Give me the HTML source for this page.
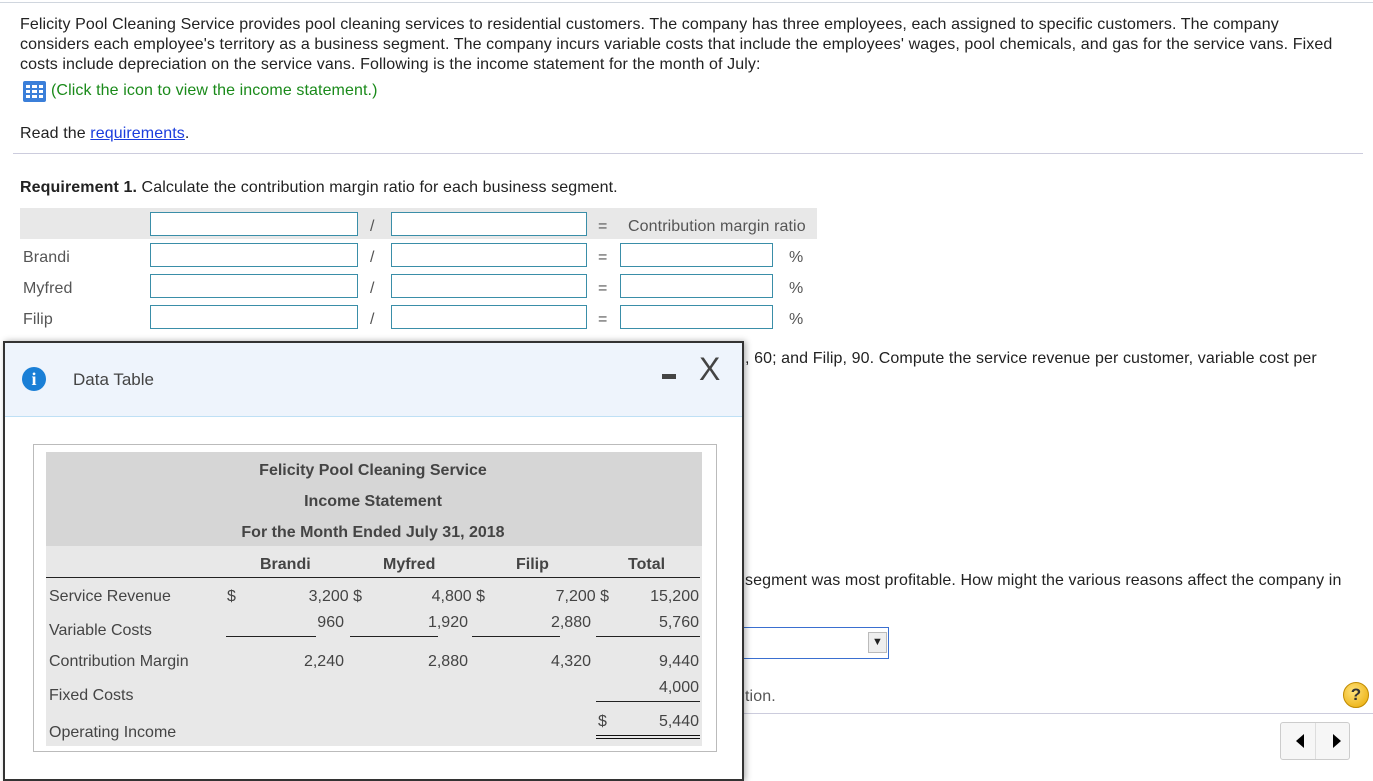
<!DOCTYPE html>
<html><head><meta charset="utf-8"><style>
*{margin:0;padding:0;box-sizing:border-box}
body{width:1373px;height:768px;overflow:hidden;background:#fff;font-family:"Liberation Sans",Arial,sans-serif;font-size:16px;letter-spacing:0.1px;color:#222;position:relative}
.a{position:absolute;white-space:nowrap}
.inp{position:absolute;height:24px;border:1px solid #3a8ea8;background:#fff}
.g{color:#555}
.dt{position:absolute;font-size:16px;letter-spacing:0;color:#444;white-space:nowrap}
.r{position:absolute;font-size:16px;letter-spacing:0;color:#444;white-space:nowrap;text-align:right;width:120px}
.c{position:absolute;left:46px;width:654px;text-align:center;font-size:16px;letter-spacing:0;font-weight:bold;color:#444}
.b{font-weight:bold}
</style></head><body>
<div class="a" style="left:0;top:2px;width:1373px;border-top:1px solid #d0d6de"></div>
<div class="a" style="left:20px;top:15px;line-height:20px">Felicity Pool Cleaning Service provides pool cleaning services to residential customers. The company has three employees, each assigned to specific customers. The company<br>considers each employee's territory as a business segment. The company incurs variable costs that include the employees' wages, pool chemicals, and gas for the service vans. Fixed<br>costs include depreciation on the service vans. Following is the income statement for the month of July:</div>
<svg class="a" style="left:23px;top:81px" width="23" height="21" viewBox="0 0 23 21"><rect width="23" height="21" rx="2" fill="#3b7fd9"/><g fill="#fff"><rect x="3" y="4" width="4" height="3"/><rect x="9" y="4" width="5" height="3"/><rect x="16" y="4" width="4" height="3"/><rect x="3" y="9" width="4" height="3"/><rect x="9" y="9" width="5" height="3"/><rect x="16" y="9" width="4" height="3"/><rect x="3" y="14" width="4" height="3"/><rect x="9" y="14" width="5" height="3"/><rect x="16" y="14" width="4" height="3"/></g></svg>
<div class="a" style="left:51px;top:82px;color:#1a8a1a">(Click the icon to view the income statement.)</div>
<div class="a" style="left:20px;top:125px">Read the <span style="color:#1a3cdd;text-decoration:underline">requirements</span>.</div>
<div class="a" style="left:13px;top:153px;width:1350px;border-top:1px solid #ccd"></div>
<div class="a" style="left:20px;top:179px"><b>Requirement 1.</b> Calculate the contribution margin ratio for each business segment.</div>
<div class="a" style="left:20px;top:208px;width:797px;height:31px;background:#e8e8e8"></div>
<div class="inp" style="left:150px;top:212px;width:208px"></div>
<div class="inp" style="left:391px;top:212px;width:196px"></div>
<div class="a g" style="left:370px;top:218px">/</div><div class="a g" style="left:598px;top:218px">=</div>
<div class="a g" style="left:628px;top:218px">Contribution margin ratio</div>
<div class="a g" style="left:23px;top:249px">Brandi</div>
<div class="a g" style="left:23px;top:280px">Myfred</div>
<div class="a g" style="left:23px;top:311px">Filip</div>
<div class="inp" style="left:150px;top:243px;width:208px"></div><div class="inp" style="left:391px;top:243px;width:196px"></div><div class="inp" style="left:620px;top:243px;width:153px"></div>
<div class="inp" style="left:150px;top:274px;width:208px"></div><div class="inp" style="left:391px;top:274px;width:196px"></div><div class="inp" style="left:620px;top:274px;width:153px"></div>
<div class="inp" style="left:150px;top:305px;width:208px"></div><div class="inp" style="left:391px;top:305px;width:196px"></div><div class="inp" style="left:620px;top:305px;width:153px"></div>
<div class="a g" style="left:370px;top:249px">/</div><div class="a g" style="left:598px;top:249px">=</div><div class="a g" style="left:789px;top:249px">%</div>
<div class="a g" style="left:370px;top:280px">/</div><div class="a g" style="left:598px;top:280px">=</div><div class="a g" style="left:789px;top:280px">%</div>
<div class="a g" style="left:370px;top:311px">/</div><div class="a g" style="left:598px;top:311px">=</div><div class="a g" style="left:789px;top:311px">%</div>
<div class="a" style="left:745px;top:350px">, 60; and Filip, 90. Compute the service revenue per customer, variable cost per</div>
<div class="a" style="left:745px;top:572px">segment was most profitable. How might the various reasons affect the company in</div>
<div class="a" style="left:740px;top:627px;width:149px;height:32px;border:1px solid #3a6fd0;border-left:none"></div>
<div class="a" style="left:868px;top:632px;width:19px;height:21px;background:#eee;border:1px solid #bbb;font-size:11px;text-align:center;line-height:19px">▼</div>
<div class="a g" style="left:745px;top:688px">tion.</div>
<div class="a" style="left:1343px;top:682px;width:26px;height:26px;border-radius:50%;background:radial-gradient(circle at 40% 35%,#ffe27a,#e8a800);border:1px solid #c08a00;text-align:center;font-weight:bold;font-size:17px;line-height:24px;color:#333">?</div>
<div class="a" style="left:740px;top:713px;width:633px;border-top:1px solid #ccd"></div>
<div class="a" style="left:1280px;top:722px;width:70px;height:38px;border:1px solid #ccc;border-radius:3px;background:#f6f6f6"></div>
<div class="a" style="left:1315px;top:723px;height:36px;border-left:1px solid #ddd"></div>
<svg class="a" style="left:1293px;top:733px" width="50" height="16"><path d="M3 8 L11 1 L11 15Z M40 1 L48 8 L40 15Z" fill="#000"/></svg>
<!-- dialog -->
<div class="a" style="left:3px;top:341px;width:741px;height:440px;border:2px solid #333;background:#fff;box-shadow:2px 0 6px rgba(0,0,0,.3)">
 <div class="a" style="left:0;top:0;width:737px;height:74px;background:#eef4fc;border-bottom:1px solid #bfe0f5"></div>
 <div class="a" style="left:17px;top:24px;width:24px;height:24px;border-radius:50%;background:#1a7fd6;color:#fff;font-family:'Liberation Serif',serif;font-weight:bold;font-size:18px;text-align:center;line-height:24px">i</div>
 <div class="a" style="left:68px;top:27px;font-size:17px;letter-spacing:0;color:#444">Data Table</div>
 <div class="a" style="left:657px;top:31px;width:14px;height:5px;background:#444"></div>
 <div class="a" style="left:694px;top:8px;font-size:32px;letter-spacing:0;color:#444">X</div>
 <div class="a" style="left:28px;top:101px;width:684px;height:308px;border:1px solid #bbb"></div>
 <div class="a" style="left:41px;top:109px;width:656px;height:294px;background:#e8e8e8"></div>
 <div class="a" style="left:41px;top:109px;width:656px;height:94px;background:#d6d6d6"></div>
</div>
<div class="c" style="top:462px">Felicity Pool Cleaning Service</div>
<div class="c" style="top:493px">Income Statement</div>
<div class="c" style="top:524px">For the Month Ended July 31, 2018</div>
<div class="dt b" style="left:260px;top:556px">Brandi</div><div class="dt b" style="left:383px;top:556px">Myfred</div><div class="dt b" style="left:516px;top:556px">Filip</div><div class="dt b" style="left:628px;top:556px">Total</div>
<div class="a" style="left:46px;top:577px;width:654px;border-top:1px solid #222"></div>
<div class="dt" style="left:49px;top:588px">Service Revenue</div>
<div class="dt" style="left:49px;top:622px">Variable Costs</div>
<div class="dt" style="left:49px;top:653px">Contribution Margin</div>
<div class="dt" style="left:49px;top:687px">Fixed Costs</div>
<div class="dt" style="left:49px;top:724px">Operating Income</div>
<div class="dt" style="left:227px;top:588px">$</div>
<div class="r" style="left:242px;top:588px">3,200 $</div><div class="r" style="left:365px;top:588px">4,800 $</div><div class="r" style="left:489px;top:588px">7,200 $</div><div class="r" style="left:579px;top:588px">15,200</div>
<div class="r" style="left:224px;top:614px">960</div><div class="r" style="left:348px;top:614px">1,920</div><div class="r" style="left:471px;top:614px">2,880</div><div class="r" style="left:579px;top:614px">5,760</div>
<div class="a" style="left:226px;top:636px;width:90px;border-top:1px solid #222"></div>
<div class="a" style="left:350px;top:636px;width:88px;border-top:1px solid #222"></div>
<div class="a" style="left:472px;top:636px;width:88px;border-top:1px solid #222"></div>
<div class="a" style="left:596px;top:636px;width:104px;border-top:1px solid #222"></div>
<div class="r" style="left:224px;top:653px">2,240</div><div class="r" style="left:348px;top:653px">2,880</div><div class="r" style="left:471px;top:653px">4,320</div><div class="r" style="left:579px;top:653px">9,440</div>
<div class="r" style="left:579px;top:679px">4,000</div>
<div class="a" style="left:596px;top:701px;width:104px;border-top:1px solid #222"></div>
<div class="dt" style="left:598px;top:713px">$</div><div class="r" style="left:579px;top:713px">5,440</div>
<div class="a" style="left:596px;top:735px;width:104px;height:4px;border-top:1px solid #111;border-bottom:1px solid #111"></div>
</body></html>
